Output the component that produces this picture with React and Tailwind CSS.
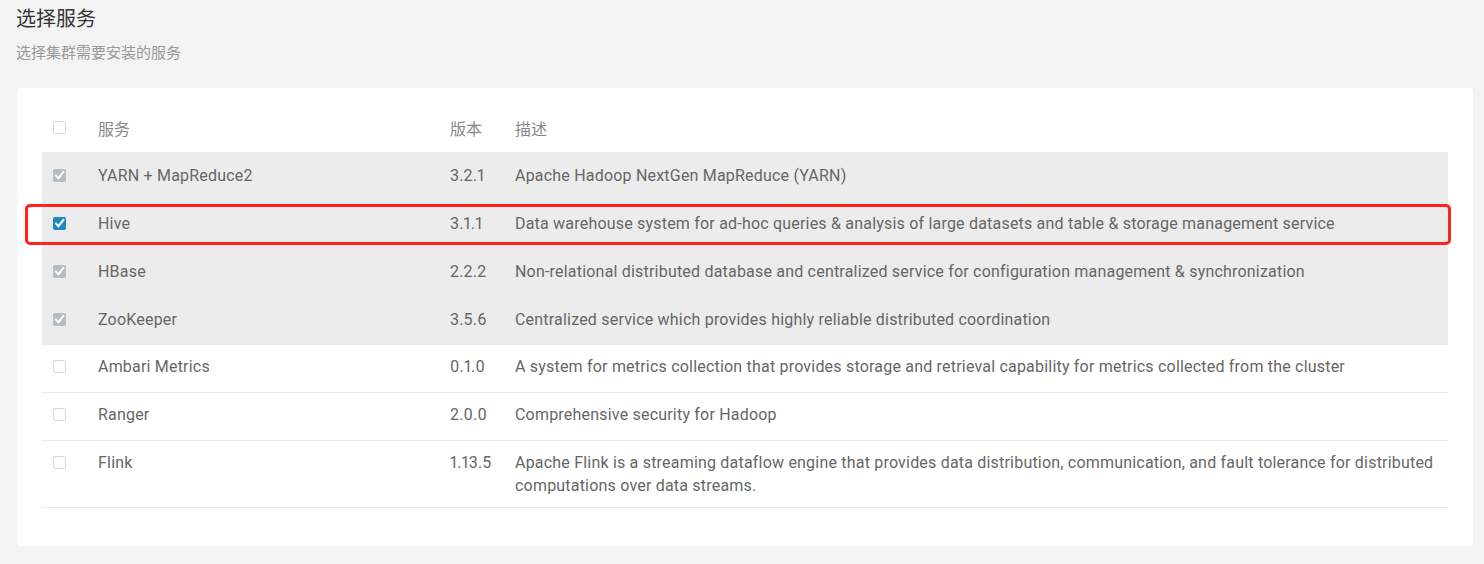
const services = [
  { name: 'YARN + MapReduce2', version: '3.2.1', desc: 'Apache Hadoop NextGen MapReduce (YARN)', state: 'locked' },
  { name: 'Hive', version: '3.1.1', desc: 'Data warehouse system for ad-hoc queries & analysis of large datasets and table & storage management service', state: 'checked', highlight: true },
  { name: 'HBase', version: '2.2.2', desc: 'Non-relational distributed database and centralized service for configuration management & synchronization', state: 'locked' },
  { name: 'ZooKeeper', version: '3.5.6', desc: 'Centralized service which provides highly reliable distributed coordination', state: 'locked' },
  { name: 'Ambari Metrics', version: '0.1.0', desc: 'A system for metrics collection that provides storage and retrieval capability for metrics collected from the cluster', state: 'off' },
  { name: 'Ranger', version: '2.0.0', desc: 'Comprehensive security for Hadoop', state: 'off' },
  { name: 'Flink', version: '1.13.5', desc: 'Apache Flink is a streaming dataflow engine that provides data distribution, communication, and fault tolerance for distributed computations over data streams.', state: 'off' },
]

const Checkbox = ({ state }) => {
  if (state === 'off') {
    return <span className="block w-[13px] h-[13px] rounded-[2px] border border-[#d9d9d9] bg-white"></span>
  }
  const bg = state === 'checked' ? 'bg-[#1b8ac2]' : 'bg-[#b4bcc6]'
  return (
    <span className={`flex items-center justify-center w-[13px] h-[13px] rounded-[2px] ${bg}`}>
      <svg width="11" height="11" viewBox="0 0 11 11">
        <path d="M2 5.6 L4.4 8.2 L9.4 1.8" fill="none" stroke="#fff" strokeWidth="2" strokeLinecap="square" />
      </svg>
    </span>
  )
}

const App = () => {
  return (
    <div className="min-h-[564px] bg-[#f3f3f3] pl-[16px] pr-[11px] pt-[6px] pb-[18px] text-[#666]" style={{ fontFamily: 'Roboto, "Noto Sans CJK SC", sans-serif' }}>
      <h1 className="text-[20px] leading-[26px] text-[#333] font-normal">选择服务</h1>
      <p className="mt-[11px] text-[15px] leading-[20px] text-[#999]">选择集群需要安装的服务</p>

      <div className="mt-[25px] ml-[1px] bg-white rounded-[4px] px-[25px] pt-[20px] pb-[38px]">
        {/* header */}
        <div className="grid grid-cols-[56px_352px_65px_1fr] items-center h-[44px] text-[16px] text-[#888]">
          <div className="pl-[11px] -mt-[5px]"><Checkbox state="off" /></div>
          <div>服务</div>
          <div>版本</div>
          <div>描述</div>
        </div>

        {services.map((s, i) => (
          <div
            key={i}
            className={`relative grid grid-cols-[56px_352px_65px_1fr] items-center min-h-[48px] text-[16px] leading-[23px] tracking-[0.2px] proportional-nums ${s.state === 'off' ? 'bg-white border-t border-[#e8e8e8] py-[10px]' : 'bg-[#ececec] py-[12px]'} ${i === services.length - 1 ? 'border-b' : ''}`}
          >
            <div className="pl-[11px] self-start pt-[5px]"><Checkbox state={s.state} /></div>
            <div className="self-start">{s.name}</div>
            <div className="self-start">{s.version}</div>
            <div className="self-start pr-[2px]">{s.desc}</div>
            {s.highlight && (
              <div className="absolute -left-[17px] -right-[3px] top-[4px] bottom-[3px] border-[3px] border-[#ff2318] rounded-[5px] pointer-events-none"></div>
            )}
          </div>
        ))}
      </div>
    </div>
  )
}

export default App
